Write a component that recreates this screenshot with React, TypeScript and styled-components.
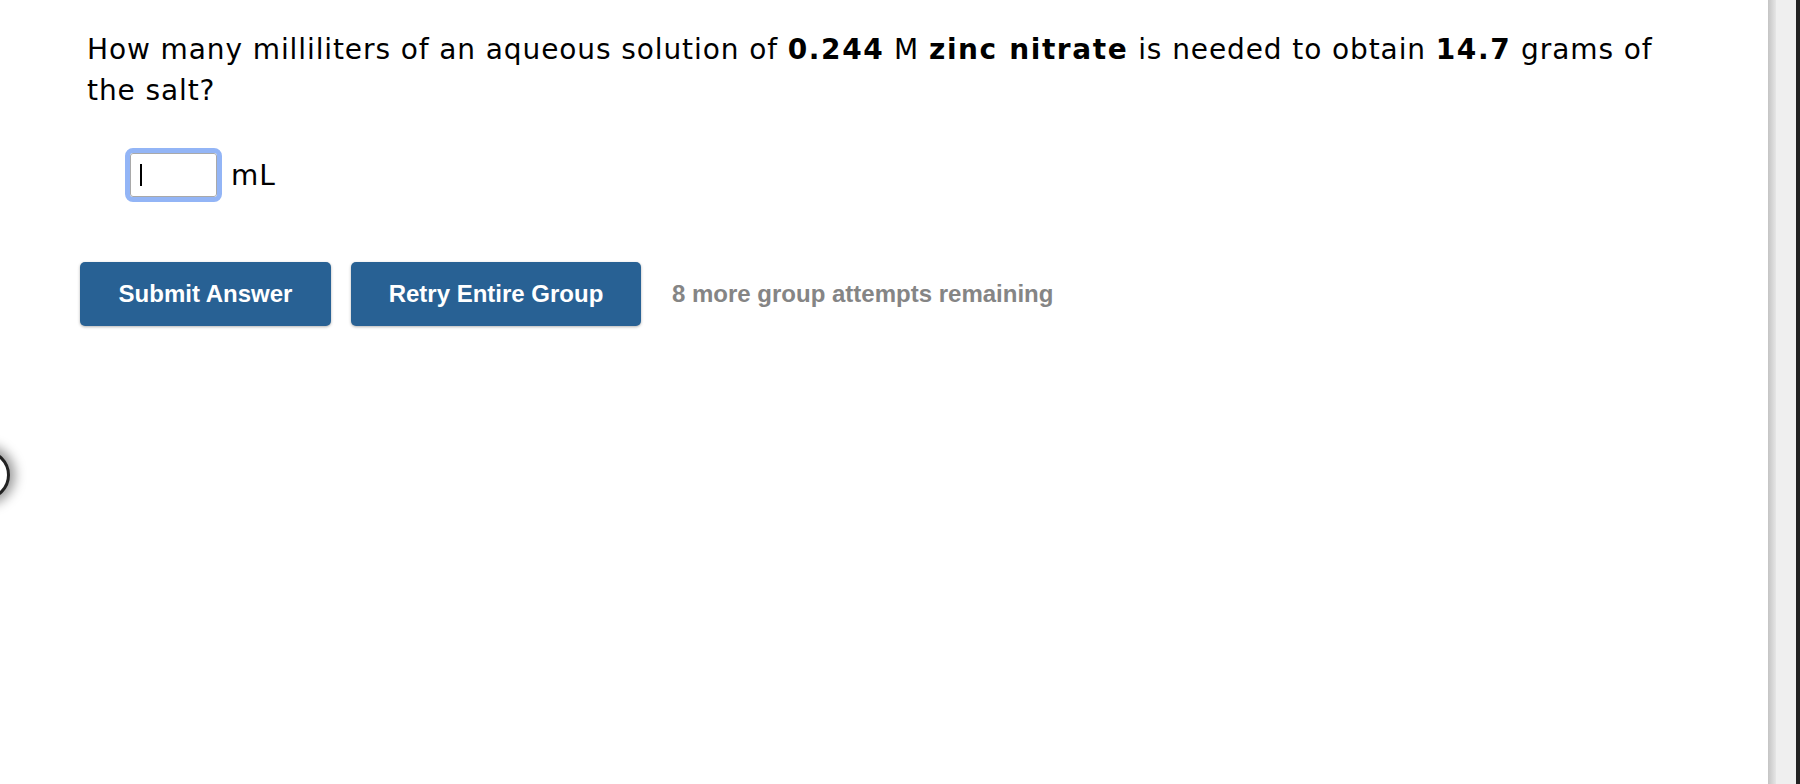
import styled, { createGlobalStyle } from 'styled-components';

const GlobalStyle = createGlobalStyle`
  html, body {
    margin: 0;
    padding: 0;
    background: #ffffff;
    overflow: hidden;
  }
  body {
    font-family: 'DejaVu Sans', Verdana, sans-serif;
  }
`;

const Page = styled.div`
  display: flex;
  width: 1800px;
  height: 784px;
  position: relative;
`;

const Content = styled.div`
  flex: 1;
  padding: 29px 0 0 87px;
`;

const Question = styled.p`
  margin: 0;
  width: 1605px;
  font-size: 28px;
  letter-spacing: 0.9px;
  line-height: 41px;
  color: #000;
`;

const Strong = styled.b`
  font-weight: bold;
  letter-spacing: 1.6px;
`;

const AnswerRow = styled.div`
  display: flex;
  align-items: center;
  gap: 14px;
  margin: 42px 0 0 43px;
`;

const AnswerInput = styled.div`
  width: 76px;
  height: 42px;
  border: 1px solid #a9a9a9;
  outline: 5px solid #93b5f6;
  border-radius: 3px;
  display: flex;
  align-items: center;
  padding-left: 9px;
  box-sizing: content-box;
`;

const Caret = styled.span`
  width: 2px;
  height: 22px;
  background: #000;
`;

const Unit = styled.span`
  font-size: 28px;
  letter-spacing: 1px;
  color: #000;
`;

const ActionRow = styled.div`
  display: flex;
  align-items: center;
  margin: 65px 0 0 -7px;
`;

const Button = styled.button<{ $w: number }>`
  width: ${({ $w }) => $w}px;
  height: 64px;
  margin-right: 20px;
  border: none;
  border-radius: 5px;
  background: #286194;
  color: #fff;
  font-family: 'Liberation Sans', Arial, sans-serif;
  font-weight: bold;
  font-size: 24px;
  box-shadow: 0 1px 3px rgba(0, 0, 0, 0.3);
  cursor: pointer;
`;

const Remaining = styled.span`
  margin-left: 11px;
  font-family: 'Liberation Sans', Arial, sans-serif;
  font-weight: bold;
  font-size: 24px;
  color: #858585;
`;

const ScrollTrack = styled.div`
  width: 32px;
  height: 100%;
  display: flex;
`;

const TrackEdge = styled.div`
  width: 8px;
  background: linear-gradient(to right, #c4c4c4, #e6e6e6);
`;

const TrackBody = styled.div`
  flex: 1;
  background: #efefef;
`;

const TrackDark = styled.div`
  width: 4px;
  background: #222;
`;

const SideHandle = styled.div`
  position: absolute;
  left: -40px;
  top: 450px;
  width: 44px;
  height: 44px;
  border-radius: 50%;
  border: 3px solid #222;
  background: #fff;
  box-shadow: 0 0 12px 5px rgba(0, 0, 0, 0.4);
`;

export default function App() {
  return (
    <>
      <GlobalStyle />
      <Page>
        <SideHandle />
        <Content>
          <Question>
            How many milliliters of an aqueous solution of <Strong>0.244</Strong> M{' '}
            <Strong>zinc nitrate</Strong> is needed to obtain <Strong>14.7</Strong> grams of the
            salt?
          </Question>
          <AnswerRow>
            <AnswerInput>
              <Caret />
            </AnswerInput>
            <Unit>mL</Unit>
          </AnswerRow>
          <ActionRow>
            <Button $w={251}>Submit Answer</Button>
            <Button $w={290}>Retry Entire Group</Button>
            <Remaining>8 more group attempts remaining</Remaining>
          </ActionRow>
        </Content>
        <ScrollTrack>
          <TrackEdge />
          <TrackBody />
          <TrackDark />
        </ScrollTrack>
      </Page>
    </>
  );
}
